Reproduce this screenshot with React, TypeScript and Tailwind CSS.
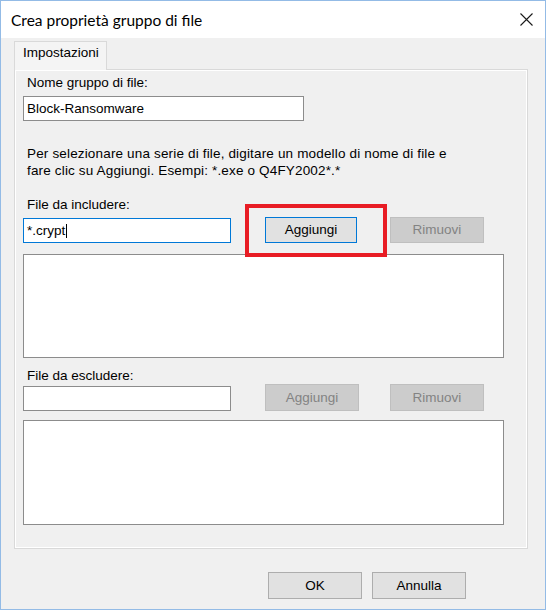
export default function App() {
  const btn =
    "flex items-center justify-center border bg-[#e1e1e1] border-[#adadad] leading-[16px]";
  const btnDisabled =
    "flex items-center justify-center border bg-[#cccccc] border-[#bfbfbf] text-[#838383] leading-[16px]";
  return (
    <div className="relative w-[546px] h-[610px] border border-[#93bbe6] bg-[#f0f0f0] font-['Liberation_Sans',Arial,sans-serif] text-[13.5px] text-black overflow-hidden">
      {/* Title bar */}
      <div className="h-[37px] bg-white flex items-center justify-between pl-[10px] pr-[12px]">
        <span className="font-['Lato',sans-serif] text-[15.5px] leading-[20px]">
          Crea proprietà gruppo di file
        </span>
        <svg width="13" height="13" viewBox="0 0 13 13" className="mb-[1px]">
          <path d="M0.5 0.5 L12.5 12.5 M12.5 0.5 L0.5 12.5" stroke="#1a1a1a" strokeWidth="1.1" fill="none" />
        </svg>
      </div>

      {/* Body */}
      <div className="pl-[13px] pt-[3px]">
        {/* Tab */}
        <div className="relative z-10 w-[93px] h-[29px] -mb-px border border-b-0 border-[#d9d9d9] bg-[#f4f4f4] pl-[8px] pt-[3px] leading-[16px]">
          Impostazioni
        </div>

        {/* Tab panel */}
        <div className="w-[514px] h-[480px] border border-[#d9d9d9] shadow-[inset_0_0_0_1px_#ffffff] pl-[8px] pt-[5px] flex flex-col">
          <div className="h-[16px] leading-[16px] pl-[4px]">Nome gruppo di file:</div>
          <div className="mt-[5px] w-[281px] h-[25px] border border-[#8c8c8c] bg-white flex items-center pl-[3px] leading-[16px]">
            Block-Ransomware
          </div>

          <div className="mt-[24px] pl-[4px] leading-[17px] whitespace-nowrap tracking-[0.16px]">
            Per selezionare una serie di file, digitare un modello di nome di file e
            <br />
            fare clic su Aggiungi. Esempi: *.exe o Q4FY2002*.*
          </div>

          <div className="mt-[18px] h-[16px] leading-[16px] pl-[4px]">File da includere:</div>
          <div className="mt-[4px] flex items-start">
            <div className="mt-[1px] w-[208px] h-[25px] border border-[#0078d7] bg-white flex items-center pl-[3px] leading-[16px]">
              *.crypt
              <span className="inline-block w-px h-[14px] bg-black ml-[1px]" />
            </div>
            <div className="ml-[34px] w-[92px] h-[26px] flex items-center justify-center border border-[#0078d7] bg-[#e1e1e1] leading-[16px]">
              Aggiungi
            </div>
            <div className={`${btnDisabled} ml-[33px] w-[94px] h-[26px]`}>Rimuovi</div>
          </div>
          <div className="mt-[11px] w-[481px] h-[104px] border border-[#8c8c8c] bg-white" />

          <div className="mt-[10px] h-[16px] leading-[16px] pl-[4px]">File da escludere:</div>
          <div className="flex items-start">
            <div className="mt-[2px] w-[208px] h-[25px] border border-[#8c8c8c] bg-white" />
            <div className={`${btnDisabled} ml-[34px] w-[94px] h-[27px]`}>Aggiungi</div>
            <div className={`${btnDisabled} ml-[31px] w-[94px] h-[27px]`}>Rimuovi</div>
          </div>
          <div className="mt-[9px] w-[481px] h-[105px] border border-[#8c8c8c] bg-white" />
        </div>

        {/* Bottom buttons */}
        <div className="mt-[23px] flex justify-end gap-[10px] pr-[79px]">
          <div className={`${btn} w-[94px] h-[27px]`}>OK</div>
          <div className={`${btn} w-[94px] h-[27px]`}>Annulla</div>
        </div>
      </div>

      {/* Red highlight box */}
      <div className="absolute left-[244px] top-[203px] w-[142px] h-[53px] border-[4px] border-[#e81c24]" />
    </div>
  );
}
